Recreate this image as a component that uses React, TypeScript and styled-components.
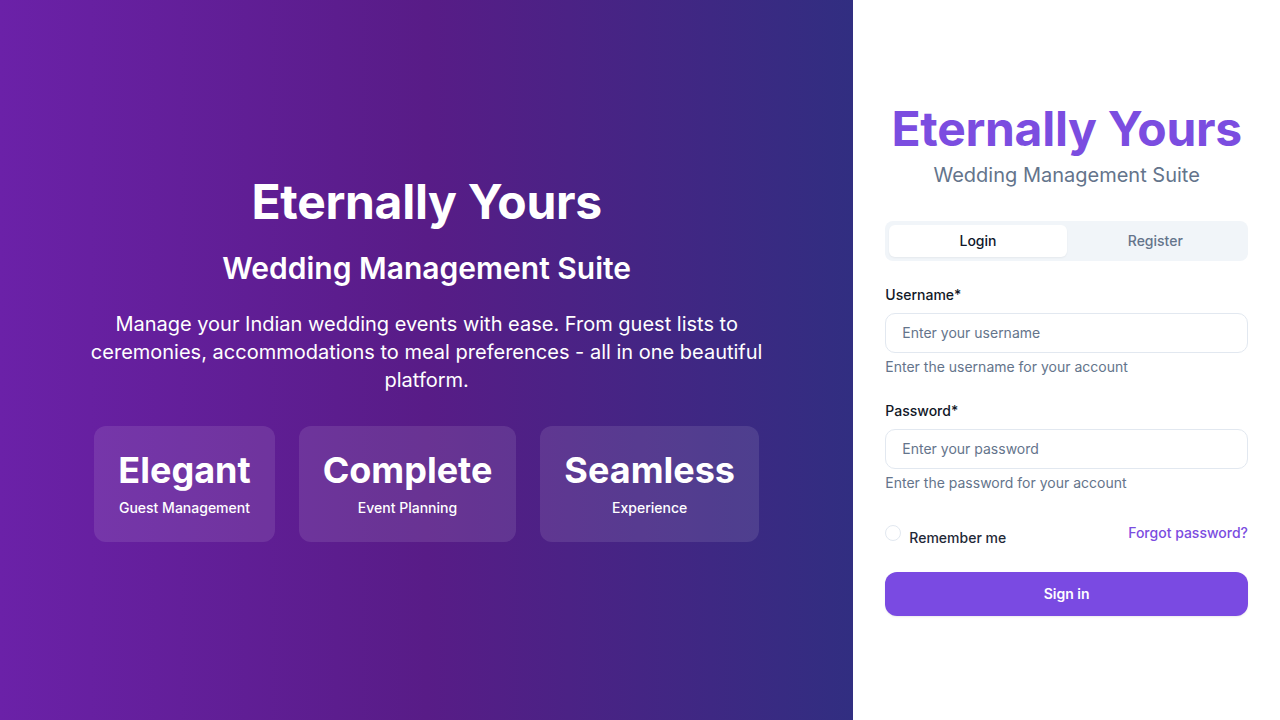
import React, { useState } from "react"
import styled, { createGlobalStyle } from "styled-components"

const GlobalStyle = createGlobalStyle`
	* {
		box-sizing: border-box;
	}
	html, body {
		margin: 0;
		padding: 0;
		height: 100%;
	}
	body {
		font-family: Inter, "Noto Sans", "Liberation Sans", sans-serif;
		-webkit-font-smoothing: antialiased;
	}
	#root {
		height: 100%;
	}
`

const Page = styled.div`
	display: grid;
	grid-template-columns: 2fr 1fr;
	width: 100%;
	height: 100vh;
	min-height: 720px;
`

const Hero = styled.section`
	display: flex;
	flex-direction: column;
	align-items: center;
	justify-content: center;
	padding: 48px;
	color: #fff;
	text-align: center;
	background: linear-gradient(to right, #6b21a8, #581c87, #312e81);
`

const HeroTitle = styled.h1`
	margin: 0 0 24px 0;
	font-size: 48px;
	line-height: 48px;
	font-weight: 700;
	letter-spacing: -0.3px;
`

const HeroSubtitle = styled.h2`
	margin: 0 0 24px 0;
	font-size: 30px;
	line-height: 36px;
	font-weight: 600;
`

const HeroText = styled.p`
	margin: 0 0 32px 0;
	max-width: 672px;
	font-size: 20px;
	line-height: 28px;
	font-weight: 400;
`

const Features = styled.div`
	display: flex;
	gap: 24px;
`

const FeatureCard = styled.div`
	display: flex;
	flex-direction: column;
	align-items: center;
	padding: 24px;
	border-radius: 12px;
	background: rgba(255, 255, 255, 0.1);
`

const FeatureTitle = styled.div`
	font-size: 36px;
	line-height: 40px;
	font-weight: 700;
	margin-bottom: 8px;
`

const FeatureText = styled.div`
	font-size: 14px;
	line-height: 20px;
	font-weight: 500;
`

const Side = styled.section`
	display: flex;
	flex-direction: column;
	justify-content: center;
	padding: 32px;
	background: #fff;
`

const Brand = styled.div`
	text-align: center;
	margin-bottom: 32px;
`

const BrandTitle = styled.h1`
	margin: 0 0 8px 0;
	color: #7b4de0;
	font-size: 48px;
	line-height: 48px;
	font-weight: 700;
	letter-spacing: -0.3px;
`

const BrandSubtitle = styled.p`
	margin: 0;
	color: #64748b;
	font-size: 20px;
	line-height: 28px;
`

const Tabs = styled.div`
	display: grid;
	grid-template-columns: 1fr 1fr;
	padding: 4px;
	height: 40px;
	border-radius: 8px;
	background: #f1f5f9;
	margin-bottom: 24px;
`

const Tab = styled.button<{ $active?: boolean }>`
	border: 0;
	border-radius: 6px;
	font-family: inherit;
	font-size: 14px;
	font-weight: 500;
	cursor: pointer;
	background: ${(p) => (p.$active ? "#fff" : "transparent")};
	color: ${(p) => (p.$active ? "#0f172a" : "#64748b")};
	box-shadow: ${(p) => (p.$active ? "0 1px 2px rgba(0,0,0,0.05)" : "none")};
`

const Form = styled.form`
	display: flex;
	flex-direction: column;
	margin: 0;
`

const Field = styled.div`
	display: flex;
	flex-direction: column;
	margin-bottom: 24px;
`

const Label = styled.label`
	font-size: 14px;
	line-height: 20px;
	font-weight: 500;
	color: #111827;
	margin-bottom: 8px;
`

const Input = styled.input`
	height: 40px;
	padding: 0 16px;
	border: 1px solid #e2e8f0;
	border-radius: 10px;
	font-family: inherit;
	font-size: 14px;
	color: #0f172a;
	outline: none;

	&::placeholder {
		color: #64748b;
	}
`

const Hint = styled.p`
	margin: 4px 0 0 0;
	font-size: 14px;
	line-height: 20px;
	color: #64748b;
`

const OptionsRow = styled.div`
	display: flex;
	justify-content: space-between;
	align-items: flex-start;
	margin-top: 6px;
	margin-bottom: 24px;
`

const Remember = styled.label`
	display: flex;
	align-items: flex-start;
	gap: 8px;
	font-size: 14px;
	line-height: 20px;
	font-weight: 500;
	color: #1f2937;
	cursor: pointer;
`

const Check = styled.span`
	width: 16px;
	height: 16px;
	margin-top: 2px;
	border-radius: 50%;
	border: 1px solid #e2e8f0;
	background: #fff;
`

const RememberText = styled.span`
	padding-top: 5px;
`

const Forgot = styled.a`
	font-size: 14px;
	line-height: 20px;
	font-weight: 500;
	color: #7b4de0;
	text-decoration: none;
	cursor: pointer;
`

const SubmitButton = styled.button`
	height: 44px;
	width: 100%;
	border: 0;
	border-radius: 12px;
	background: #7a4ae2;
	color: #fff;
	font-family: inherit;
	font-size: 14px;
	font-weight: 600;
	cursor: pointer;
	box-shadow: 0 1px 2px rgba(0, 0, 0, 0.08);
`

const features = [
	{ title: "Elegant", text: "Guest Management" },
	{ title: "Complete", text: "Event Planning" },
	{ title: "Seamless", text: "Experience" },
]

const App = () => {
	const [tab, setTab] = useState("login")

	return (
		<>
			<GlobalStyle />
			<Page>
				<Hero>
					<HeroTitle>Eternally Yours</HeroTitle>
					<HeroSubtitle>Wedding Management Suite</HeroSubtitle>
					<HeroText>
						Manage your Indian wedding events with ease. From guest lists to ceremonies,
						accommodations to meal preferences - all in one beautiful platform.
					</HeroText>
					<Features>
						{features.map((f) => (
							<FeatureCard key={f.title}>
								<FeatureTitle>{f.title}</FeatureTitle>
								<FeatureText>{f.text}</FeatureText>
							</FeatureCard>
						))}
					</Features>
				</Hero>

				<Side>
					<Brand>
						<BrandTitle>Eternally Yours</BrandTitle>
						<BrandSubtitle>Wedding Management Suite</BrandSubtitle>
					</Brand>

					<Tabs>
						<Tab $active={tab === "login"} onClick={() => setTab("login")}>
							Login
						</Tab>
						<Tab $active={tab === "register"} onClick={() => setTab("register")}>
							Register
						</Tab>
					</Tabs>

					<Form onSubmit={(e) => e.preventDefault()}>
						<Field>
							<Label>Username*</Label>
							<Input placeholder="Enter your username" />
							<Hint>Enter the username for your account</Hint>
						</Field>
						<Field>
							<Label>Password*</Label>
							<Input type="password" placeholder="Enter your password" />
							<Hint>Enter the password for your account</Hint>
						</Field>

						<OptionsRow>
							<Remember>
								<Check />
								<RememberText>Remember me</RememberText>
							</Remember>
							<Forgot>Forgot password?</Forgot>
						</OptionsRow>

						<SubmitButton type="submit">Sign in</SubmitButton>
					</Form>
				</Side>
			</Page>
		</>
	)
}

export default App
